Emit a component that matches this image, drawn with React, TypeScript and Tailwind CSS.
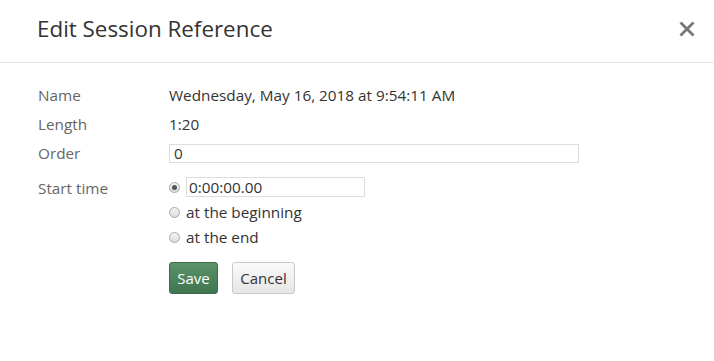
import React from 'react';

const font = { fontFamily: '"Open Sans", "Segoe UI", sans-serif' };

const Row = ({ label, children, className = '' }: React.PropsWithChildren<{ label: string; className?: string }>) => (
    <div className={`flex items-center ${className}`}>
        <div className="w-[131px] shrink-0 text-[#666]">{label}</div>
        <div className="text-[#333]">{children}</div>
    </div>
);

const Radio = ({ checked = false }: { checked?: boolean }) => (
    <span className="w-[11px] h-[11px] rounded-full border border-[#a9a9a9] bg-gradient-to-b from-[#f4f4f4] to-[#dcdcdc] flex items-center justify-center shrink-0">
        {checked && <span className="w-[5px] h-[5px] rounded-full bg-[#555]" />}
    </span>
);

const App = () => {
    return (
        <div className="w-[714px] h-[361px] bg-white text-[15.3px]" style={font}>
            <div className="h-[63px] border-b border-[#e5e5e5] flex items-center justify-between pl-[37px] pr-[19px]">
                <h2 className="text-[22.4px] text-[#333] pb-[5px]">Edit Session Reference</h2>
                <svg width="16" height="16" viewBox="0 0 16 16" className="mb-[4px]">
                    <path d="M1.5 1.5 L14.5 14.5 M14.5 1.5 L1.5 14.5" stroke="#777" strokeWidth="2.8" />
                </svg>
            </div>
            <div className="pl-[38px] pt-[21px]">
                <Row label="Name" className="h-[22px]">Wednesday, May 16, 2018 at 9:54:11 AM</Row>
                <Row label="Length" className="h-[22px] mt-[7px]">1:20</Row>
                <Row label="Order" className="h-[22px] mt-[7px]">
                    <div className="w-[410px] h-[19px] border border-[#ddd] flex items-center px-[4px]">0</div>
                </Row>
                <div className="flex mt-[13px]">
                    <div className="w-[131px] shrink-0 text-[#666]">Start time</div>
                    <div className="text-[#333]">
                        <div className="flex items-center gap-[6px] h-[20px]">
                            <Radio checked />
                            <div className="w-[179px] h-[20px] border border-[#ddd] flex items-center px-[2px]">0:00:00.00</div>
                        </div>
                        <div className="flex items-center gap-[6px] h-[20px] mt-[5px]">
                            <Radio />
                            <span>at the beginning</span>
                        </div>
                        <div className="flex items-center gap-[6px] h-[20px] mt-[5px]">
                            <Radio />
                            <span>at the end</span>
                        </div>
                        <div className="flex gap-[14px] mt-[15px]">
                            <button className="h-[32px] w-[49px] rounded-[3px] border border-[#3b6b48] bg-gradient-to-b from-[#5a9468] to-[#3f7550] text-white text-[15px]">Save</button>
                            <button className="h-[32px] w-[63px] rounded-[3px] border border-[#c8c8c8] bg-gradient-to-b from-[#fafafa] to-[#e6e6e6] text-[#333] text-[15px]">Cancel</button>
                        </div>
                    </div>
                </div>
            </div>
        </div>
    );
};

export default App;
